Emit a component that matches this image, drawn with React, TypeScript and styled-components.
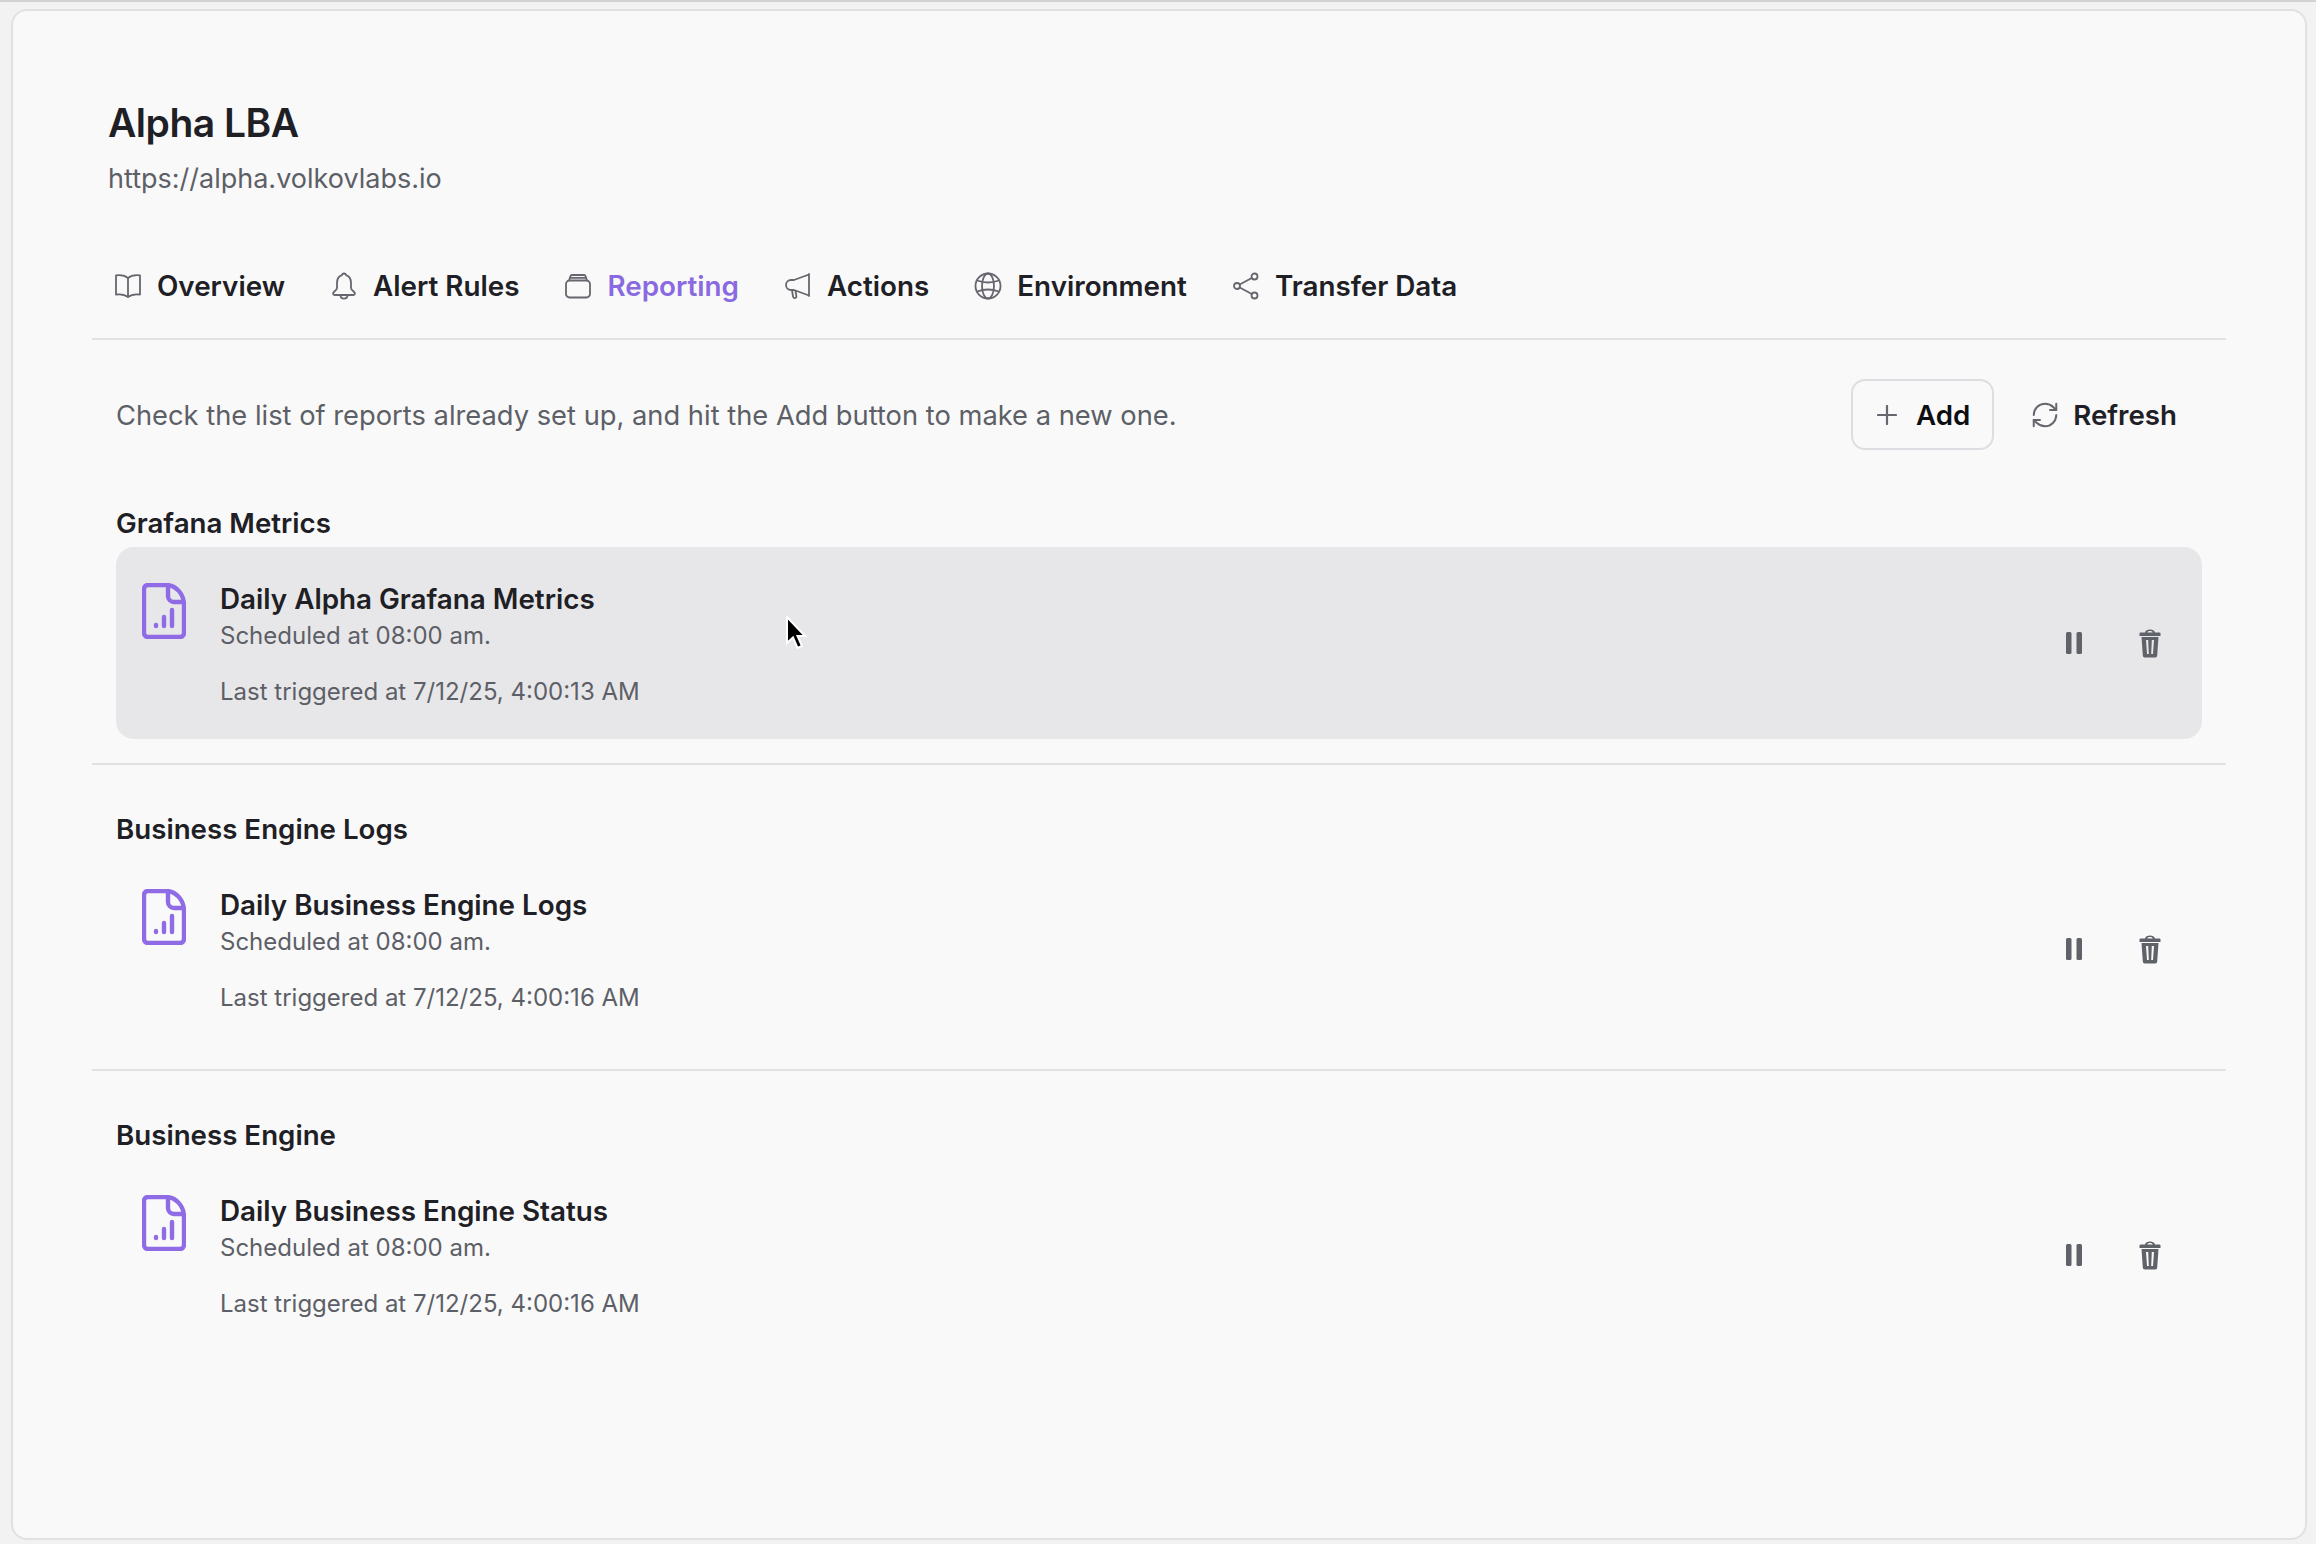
import React from 'react';
import styled, { createGlobalStyle } from 'styled-components';
import { RefreshCw } from 'lucide-react';

const GlobalStyle = createGlobalStyle`
  html, body {
    margin: 0;
    padding: 0;
    background: #f2f2f3;
    font-family: Inter, "Liberation Sans", sans-serif;
  }
`;

const Window = styled.div`
  width: 2316px;
  height: 1544px;
  box-sizing: border-box;
  border-top: 2px solid #d2d2d4;
  padding: 7px 9px 4px 11px;
  overflow: hidden;
`;

const Panel = styled.main`
  height: 100%;
  box-sizing: border-box;
  background: #f9f9f9;
  border: 2px solid #e1e1e3;
  border-radius: 16px;
  padding: 84px 79px 0;
`;

const Title = styled.h1`
  margin: 0 0 8px 16px;
  font-size: 39px;
  line-height: 56px;
  font-weight: 600;
  letter-spacing: -0.5px;
  color: #1e2025;
`;

const Url = styled.div`
  margin-left: 16px;
  font-size: 27px;
  line-height: 40px;
  color: #5d5f67;
`;

const TabBar = styled.nav`
  display: flex;
  align-items: center;
  gap: 45px;
  height: 60px;
  margin-top: 57px;
  padding: 0 0 22px 22px;
  border-bottom: 2px solid #e2e2e4;
`;

const Tab = styled.a<{ $active?: boolean }>`
  display: flex;
  align-items: center;
  gap: 15px;
  font-size: 27.8px;
  font-weight: 600;
  color: ${(p) => (p.$active ? '#8a6ae0' : '#1e2025')};
`;

const TabIcon = styled.svg`
  width: 28px;
  height: 28px;
  flex: none;
  fill: none;
  stroke: #66676e;
  stroke-width: 1.8;
  stroke-linecap: round;
  stroke-linejoin: round;
`;

const Toolbar = styled.div`
  display: flex;
  align-items: center;
  height: 71px;
  margin-top: 39px;
  padding: 0 49px 0 24px;
`;

const Hint = styled.p`
  flex: 1;
  margin: 2px 0 0;
  font-size: 27.3px;
  color: #5d5f67;
`;

const AddButton = styled.button`
  display: flex;
  align-items: center;
  gap: 19px;
  height: 71px;
  box-sizing: border-box;
  padding: 0 22px 0 24px;
  background: transparent;
  border: 2px solid #dddee1;
  border-radius: 14px;
  font: 600 27.7px Inter, sans-serif;
  color: #0d0e10;
`;

const RefreshButton = styled.button`
  display: flex;
  align-items: center;
  gap: 13px;
  margin-left: 36px;
  padding: 0;
  background: transparent;
  border: 0;
  font: 600 27.7px Inter, sans-serif;
  color: #1e2025;
`;

const PlusIcon = styled.svg`
  width: 20px;
  height: 20px;
  stroke: #66676e;
  stroke-width: 2.2;
  stroke-linecap: round;
`;

const Section = styled.section<{ $first?: boolean; $last?: boolean }>`
  margin-top: ${(p) => (p.$first ? '56px' : '47px')};
  padding: 0 24px 24px;
  border-bottom: ${(p) => (p.$last ? '0' : '2px solid #e2e2e4')};
`;

const SectionTitle = styled.h2`
  margin: 0 0 7px;
  font-size: 27.7px;
  line-height: 34px;
  font-weight: 600;
  color: #1e2025;
`;

const Item = styled.div<{ $hover?: boolean }>`
  position: relative;
  display: flex;
  height: 192px;
  box-sizing: border-box;
  padding: 34px 41px 30px 26px;
  border-radius: 18px;
  background: ${(p) => (p.$hover ? '#e7e7e9' : 'transparent')};
`;

const FileIcon = styled.svg`
  width: 44px;
  height: 56px;
  flex: none;
  margin: 2px 34px 0 0;
  fill: none;
  stroke: #8f6ce6;
  stroke-width: 4.4;
  stroke-linecap: round;
  stroke-linejoin: round;
`;

const Info = styled.div`
  flex: 1;
`;

const ItemTitle = styled.div`
  margin-bottom: 2px;
  font-size: 27.8px;
  line-height: 36px;
  font-weight: 600;
  color: #1e2025;
`;

const Meta = styled.div`
  font-size: 24px;
  line-height: 34px;
  color: #5d5f67;
  & + & {
    margin-top: 22px;
  }
`;

const Actions = styled.div`
  display: flex;
  align-items: center;
  gap: 57px;
  align-self: center;
  margin-top: -4px;
`;

const PauseIcon = styled.svg`
  width: 16px;
  height: 22px;
  fill: #60626a;
`;

const TrashIcon = styled.svg`
  width: 22px;
  height: 30px;
  fill: #60626a;
  fill-rule: evenodd;
`;

const Cursor = styled.svg`
  position: absolute;
  left: 669px;
  top: 69px;
  width: 22px;
  height: 34px;
`;

const tabs = [
  {
    label: 'Overview',
    icon: (
      <path d="M14 6C11 3.5 6 2.8 2 3.4V22.5C6 22 11 22.5 14 25C17 22.5 22 22 26 22.5V3.4C22 2.8 17 3.5 14 6ZM14 6V25" />
    ),
  },
  {
    label: 'Alert Rules',
    icon: (
      <path d="M14 1.5a2.2 2.2 0 0 0-2.1 1.6C8 4.3 7 7.5 7 11v5C7 18.5 3 19.5 3 21.7A1.6 1.6 0 0 0 4.6 23H23.4A1.6 1.6 0 0 0 25 21.7C25 19.5 21 18.5 21 16V11C21 7.5 20 4.3 16.1 3.1A2.2 2.2 0 0 0 14 1.5ZM10.5 23c0 2.2 1.6 3.7 3.5 3.7s3.5-1.5 3.5-3.7" />
    ),
  },
  {
    label: 'Reporting',
    active: true,
    icon: (
      <path d="M2 12a3.5 3.5 0 0 1 3.5-3.5h17A3.5 3.5 0 0 1 26 12v10a3.5 3.5 0 0 1-3.5 3.5h-17A3.5 3.5 0 0 1 2 22ZM5 8.5L6.5 4a1.5 1.5 0 0 1 1.4-1h12.2a1.5 1.5 0 0 1 1.4 1L23 8.5M6 5.8H22" />
    ),
  },
  {
    label: 'Actions',
    icon: (
      <path d="M25 2.5L10 8H7a5 5 0 0 0 0 10H10L25 23.5ZM25 2V24M8 18l1 6.5a1.7 1.7 0 0 0 3.4-.3L11.5 19" />
    ),
  },
  {
    label: 'Environment',
    icon: (
      <>
        <circle cx="14" cy="14" r="12.5" />
        <ellipse cx="14" cy="14" rx="6" ry="12.5" />
        <path d="M3.2 8.5Q14 12.5 24.8 8.5M3.2 19.5Q14 15.5 24.8 19.5" />
      </>
    ),
  },
  {
    label: 'Transfer Data',
    icon: (
      <>
        <circle cx="22.5" cy="4.5" r="3" />
        <circle cx="5" cy="14" r="3" />
        <circle cx="22.5" cy="23.5" r="3" />
        <path d="M7.7 12.5L19.8 6M7.7 15.5L19.8 22" />
      </>
    ),
  },
];

const sections = [
  { group: 'Grafana Metrics', name: 'Daily Alpha Grafana Metrics', last: '7/12/25, 4:00:13 AM', hover: true },
  { group: 'Business Engine Logs', name: 'Daily Business Engine Logs', last: '7/12/25, 4:00:16 AM' },
  { group: 'Business Engine', name: 'Daily Business Engine Status', last: '7/12/25, 4:00:16 AM' },
];

const App = () => {
  return (
    <Window>
      <GlobalStyle />
      <Panel>
        <Title>Alpha LBA</Title>
        <Url>https://alpha.volkovlabs.io</Url>
        <TabBar>
          {tabs.map((t) => (
            <Tab key={t.label} $active={t.active}>
              <TabIcon viewBox="0 0 28 28">{t.icon}</TabIcon>
              {t.label}
            </Tab>
          ))}
        </TabBar>
        <Toolbar>
          <Hint>Check the list of reports already set up, and hit the Add button to make a new one.</Hint>
          <AddButton>
            <PlusIcon viewBox="0 0 20 20">
              <path d="M10 1V19M1 10H19" />
            </PlusIcon>
            Add
          </AddButton>
          <RefreshButton>
            <RefreshCw size={30} color="#66676e" strokeWidth={1.6} />
            Refresh
          </RefreshButton>
        </Toolbar>
        {sections.map((s, i) => (
          <Section key={s.group} $first={i === 0} $last={i === sections.length - 1}>
            <SectionTitle>{s.group}</SectionTitle>
            <Item $hover={s.hover}>
              <FileIcon viewBox="0 0 44 56">
                <path d="M6 2H24C34 2 42 11 42 22V50a4 4 0 0 1-4 4H6a4 4 0 0 1-4-4V6a4 4 0 0 1 4-4Z" />
                <path d="M26 3V13a6 6 0 0 0 6 6H41" />
                <path d="M14 42V43M22 34V43M30 27V43" />
              </FileIcon>
              <Info>
                <ItemTitle>{s.name}</ItemTitle>
                <Meta>Scheduled at 08:00 am.</Meta>
                <Meta>Last triggered at {s.last}</Meta>
              </Info>
              <Actions>
                <PauseIcon viewBox="0 0 16 22">
                  <rect x="0" y="0" width="5.5" height="22" rx="1.5" />
                  <rect x="10.5" y="0" width="5.5" height="22" rx="1.5" />
                </PauseIcon>
                <TrashIcon viewBox="0 0 22 30">
                  <path d="M0.5 5.5a1 1 0 0 1 1-1H6C6.5 0.5 15.5 0.5 16 4.5H20.5a1 1 0 0 1 1 1V8H0.5ZM8.2 4.5H13.8C13 2.6 9 2.6 8.2 4.5Z" />
                  <path d="M2.5 9H19.5L18.2 27.5a2 2 0 0 1-2 2H5.8a2 2 0 0 1-2-2ZM7 12L8 26H9.8L9.2 12ZM12.8 12L12.2 26H14L15 12Z" />
                </TrashIcon>
              </Actions>
              {s.hover && (
                <Cursor viewBox="0 0 22 34">
                  <path d="M2 1V27L8 21.5L12.5 32L17 30L12.5 20H20Z" fill="#000" stroke="#fff" strokeWidth="2" />
                </Cursor>
              )}
            </Item>
          </Section>
        ))}
      </Panel>
    </Window>
  );
};

export default App;
